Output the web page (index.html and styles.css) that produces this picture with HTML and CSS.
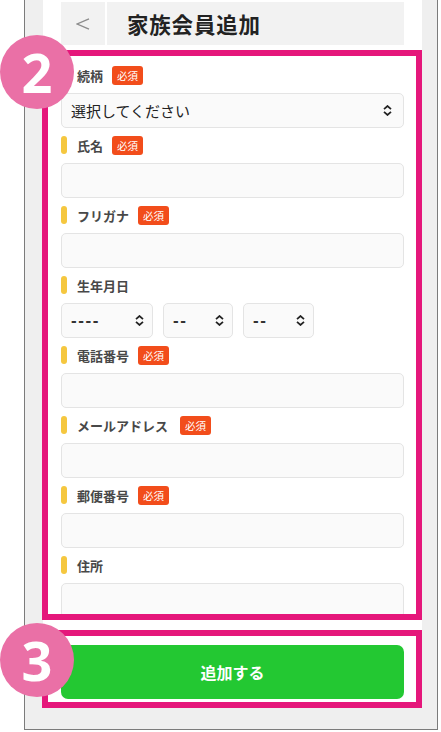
FILE: index.html
```html
<!DOCTYPE html>
<html lang="ja">
<head>
<meta charset="utf-8">
<title>家族会員追加</title>
<link rel="stylesheet" href="styles.css">
</head>
<body>
<div class="frame">
  <div class="screen">
    <header class="topbar">
      <div class="back">
        <svg width="14" height="12" viewBox="0 0 14 12"><polyline points="13,0.8 1.2,6 13,11.2" fill="none" stroke="#8c8c8c" stroke-width="1.3"/></svg>
      </div>
      <h1 class="title">家族会員追加</h1>
    </header>

    <section class="callout callout-form">
      <div class="field">
        <div class="field-label">続柄<span class="req">必須</span></div>
        <div class="control select">
          <select><option>選択してください</option></select>
          <svg viewBox="0 0 9 11"><path d="M1 4.2 L4.5 1 L8 4.2 M1 6.8 L4.5 10 L8 6.8" fill="none" stroke="#222" stroke-width="1.7"/></svg>
        </div>
      </div>
      <div class="field">
        <div class="field-label">氏名<span class="req">必須</span></div>
        <input class="control input" type="text">
      </div>
      <div class="field">
        <div class="field-label">フリガナ<span class="req">必須</span></div>
        <input class="control input" type="text">
      </div>
      <div class="field">
        <div class="field-label">生年月日</div>
        <div class="control dates">
          <div class="select date-y">
            <select class="date"><option>----</option></select>
            <svg viewBox="0 0 9 11"><path d="M1 4.2 L4.5 1 L8 4.2 M1 6.8 L4.5 10 L8 6.8" fill="none" stroke="#222" stroke-width="1.7"/></svg>
          </div>
          <div class="select date-m">
            <select class="date"><option>--</option></select>
            <svg viewBox="0 0 9 11"><path d="M1 4.2 L4.5 1 L8 4.2 M1 6.8 L4.5 10 L8 6.8" fill="none" stroke="#222" stroke-width="1.7"/></svg>
          </div>
          <div class="select date-d">
            <select class="date"><option>--</option></select>
            <svg viewBox="0 0 9 11"><path d="M1 4.2 L4.5 1 L8 4.2 M1 6.8 L4.5 10 L8 6.8" fill="none" stroke="#222" stroke-width="1.7"/></svg>
          </div>
        </div>
      </div>
      <div class="field">
        <div class="field-label">電話番号<span class="req">必須</span></div>
        <input class="control input" type="text">
      </div>
      <div class="field">
        <div class="field-label">メールアドレス<span class="req req-wide">必須</span></div>
        <input class="control input" type="text">
      </div>
      <div class="field">
        <div class="field-label">郵便番号<span class="req">必須</span></div>
        <input class="control input" type="text">
      </div>
      <div class="field">
        <div class="field-label">住所</div>
        <input class="control input" type="text">
      </div>
    </section>

    <section class="callout callout-action">
      <button class="submit" type="button">追加する</button>
    </section>
  </div>
  <span class="step step-2">2</span>
  <span class="step step-3">3</span>
</div>
</body>
</html>
```
FILE: styles.css
```css
* { box-sizing: border-box; }

body {
  margin: 0;
  background: #fff;
  font-family: "Noto Sans CJK JP", "Noto Sans", sans-serif;
  color: #222;
}

.frame {
  position: relative;
  margin-left: 24px;
  width: 414px;
  height: 730px;
  border: 1px solid #7b7b7b;
  border-top: 0;
  background: #efefef;
  padding: 0 15px 0 18px;
}

.screen {
  background: #fff;
  padding-top: 2px;
  display: flex;
  flex-direction: column;
}

.topbar {
  margin: 0 18px;
  height: 43px;
  display: flex;
  gap: 2px;
}

.back {
  width: 44px;
  background: #f2f2f2;
  display: flex;
  align-items: center;
  justify-content: center;
}

.title {
  flex: 1;
  margin: 0;
  background: #f2f2f2;
  display: flex;
  align-items: center;
  padding-left: 20px;
  font-size: 21.5px;
  font-weight: 700;
  color: #222;
  letter-spacing: 0.8px;
}

.callout {
  border: 6px solid #e5177b;
  margin-left: -1px;
}

.callout-form {
  margin-top: 5px;
  height: 570px;
  overflow: hidden;
  padding: 10px 12px 0 13px;
}

.callout-action {
  margin-top: 10px;
  height: 78px;
  padding: 9px 12px 3px 13px;
}

.field + .field { margin-top: 8px; }

.field-label {
  display: flex;
  align-items: center;
  height: 18px;
  font-size: 13px;
  font-weight: 700;
  color: #484848;
}

.field-label::before {
  content: "";
  width: 6px;
  height: 18px;
  border-radius: 3px;
  background: #f5c73f;
  margin-right: 10px;
}

.req {
  margin-left: 9px;
  background: #f24d1b;
  color: #fff;
  font-size: 10.5px;
  font-weight: 400;
  height: 19px;
  line-height: 19px;
  padding: 0 5px;
  border-radius: 3px;
}

.req-wide { margin-left: 12px; }

.control {
  margin-top: 9px;
  height: 35px;
}

.input {
  display: block;
  width: 100%;
  border: 1px solid #e4e4e4;
  border-radius: 5px;
  background: #fafafa;
}

.select { position: relative; }

.select select {
  appearance: none;
  -webkit-appearance: none;
  display: block;
  width: 100%;
  height: 35px;
  margin: 0;
  border: 1px solid #e4e4e4;
  border-radius: 5px;
  background: #fafafa;
  font-family: "Noto Sans CJK JP", "Noto Sans", sans-serif;
  font-size: 15px;
  color: #222;
  padding: 0 30px 0 9px;
}

.select svg {
  position: absolute;
  right: 12px;
  top: 12px;
  width: 9px;
  height: 11px;
  pointer-events: none;
}

.dates {
  display: flex;
  gap: 10px;
}

.date-y { width: 92px; }
.date-m { width: 70px; }
.date-d { width: 71px; }

.dates .select svg { right: 9px; }

.select .date {
  font-family: "Liberation Sans", sans-serif;
  font-size: 17px;
  font-weight: 700;
  letter-spacing: 1.6px;
  color: #333;
}

.submit {
  display: block;
  width: 100%;
  height: 54px;
  border: 0;
  border-radius: 7px;
  background: #23c832;
  color: #fff;
  font-family: "Noto Sans CJK JP", "Noto Sans", sans-serif;
  font-size: 16px;
  font-weight: 700;
}

.step {
  position: absolute;
  left: -25px;
  width: 74px;
  height: 74px;
  border-radius: 50%;
  background: #ea70a6;
  color: #fff;
  font-family: "Noto Sans", sans-serif;
  font-size: 54px;
  font-weight: 700;
  line-height: 1;
  display: flex;
  align-items: center;
  justify-content: center;
}

.step-2 { top: 35px; }
.step-3 { top: 623px; }
```
